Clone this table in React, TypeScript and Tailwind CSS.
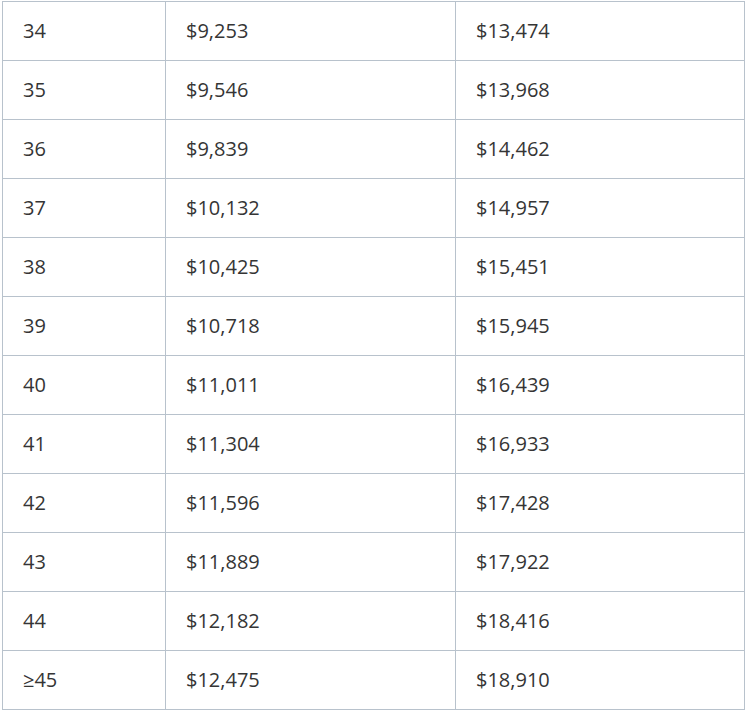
const rows: [string, string, string][] = [
  ['34', '$9,253', '$13,474'],
  ['35', '$9,546', '$13,968'],
  ['36', '$9,839', '$14,462'],
  ['37', '$10,132', '$14,957'],
  ['38', '$10,425', '$15,451'],
  ['39', '$10,718', '$15,945'],
  ['40', '$11,011', '$16,439'],
  ['41', '$11,304', '$16,933'],
  ['42', '$11,596', '$17,428'],
  ['43', '$11,889', '$17,922'],
  ['44', '$12,182', '$18,416'],
  ['≥45', '$12,475', '$18,910'],
];

export default function App() {
  return (
    <div className="w-[746px] h-[710px] bg-white pt-px pl-[2px]" style={{ fontFamily: '"Open Sans", sans-serif' }}>
      <div className="w-[743px] border-t border-l border-[#b8c2cc] text-[20px] text-[#353535]">
        {rows.map(([a, b, c]) => (
          <div key={a} className="flex h-[59px]">
            <div className="w-[163px] border-r border-b border-[#b8c2cc] pl-5 flex items-center">{a}</div>
            <div className="w-[290px] border-r border-b border-[#b8c2cc] pl-5 flex items-center">{b}</div>
            <div className="w-[289px] border-r border-b border-[#b8c2cc] pl-5 flex items-center">{c}</div>
          </div>
        ))}
      </div>
    </div>
  );
}
